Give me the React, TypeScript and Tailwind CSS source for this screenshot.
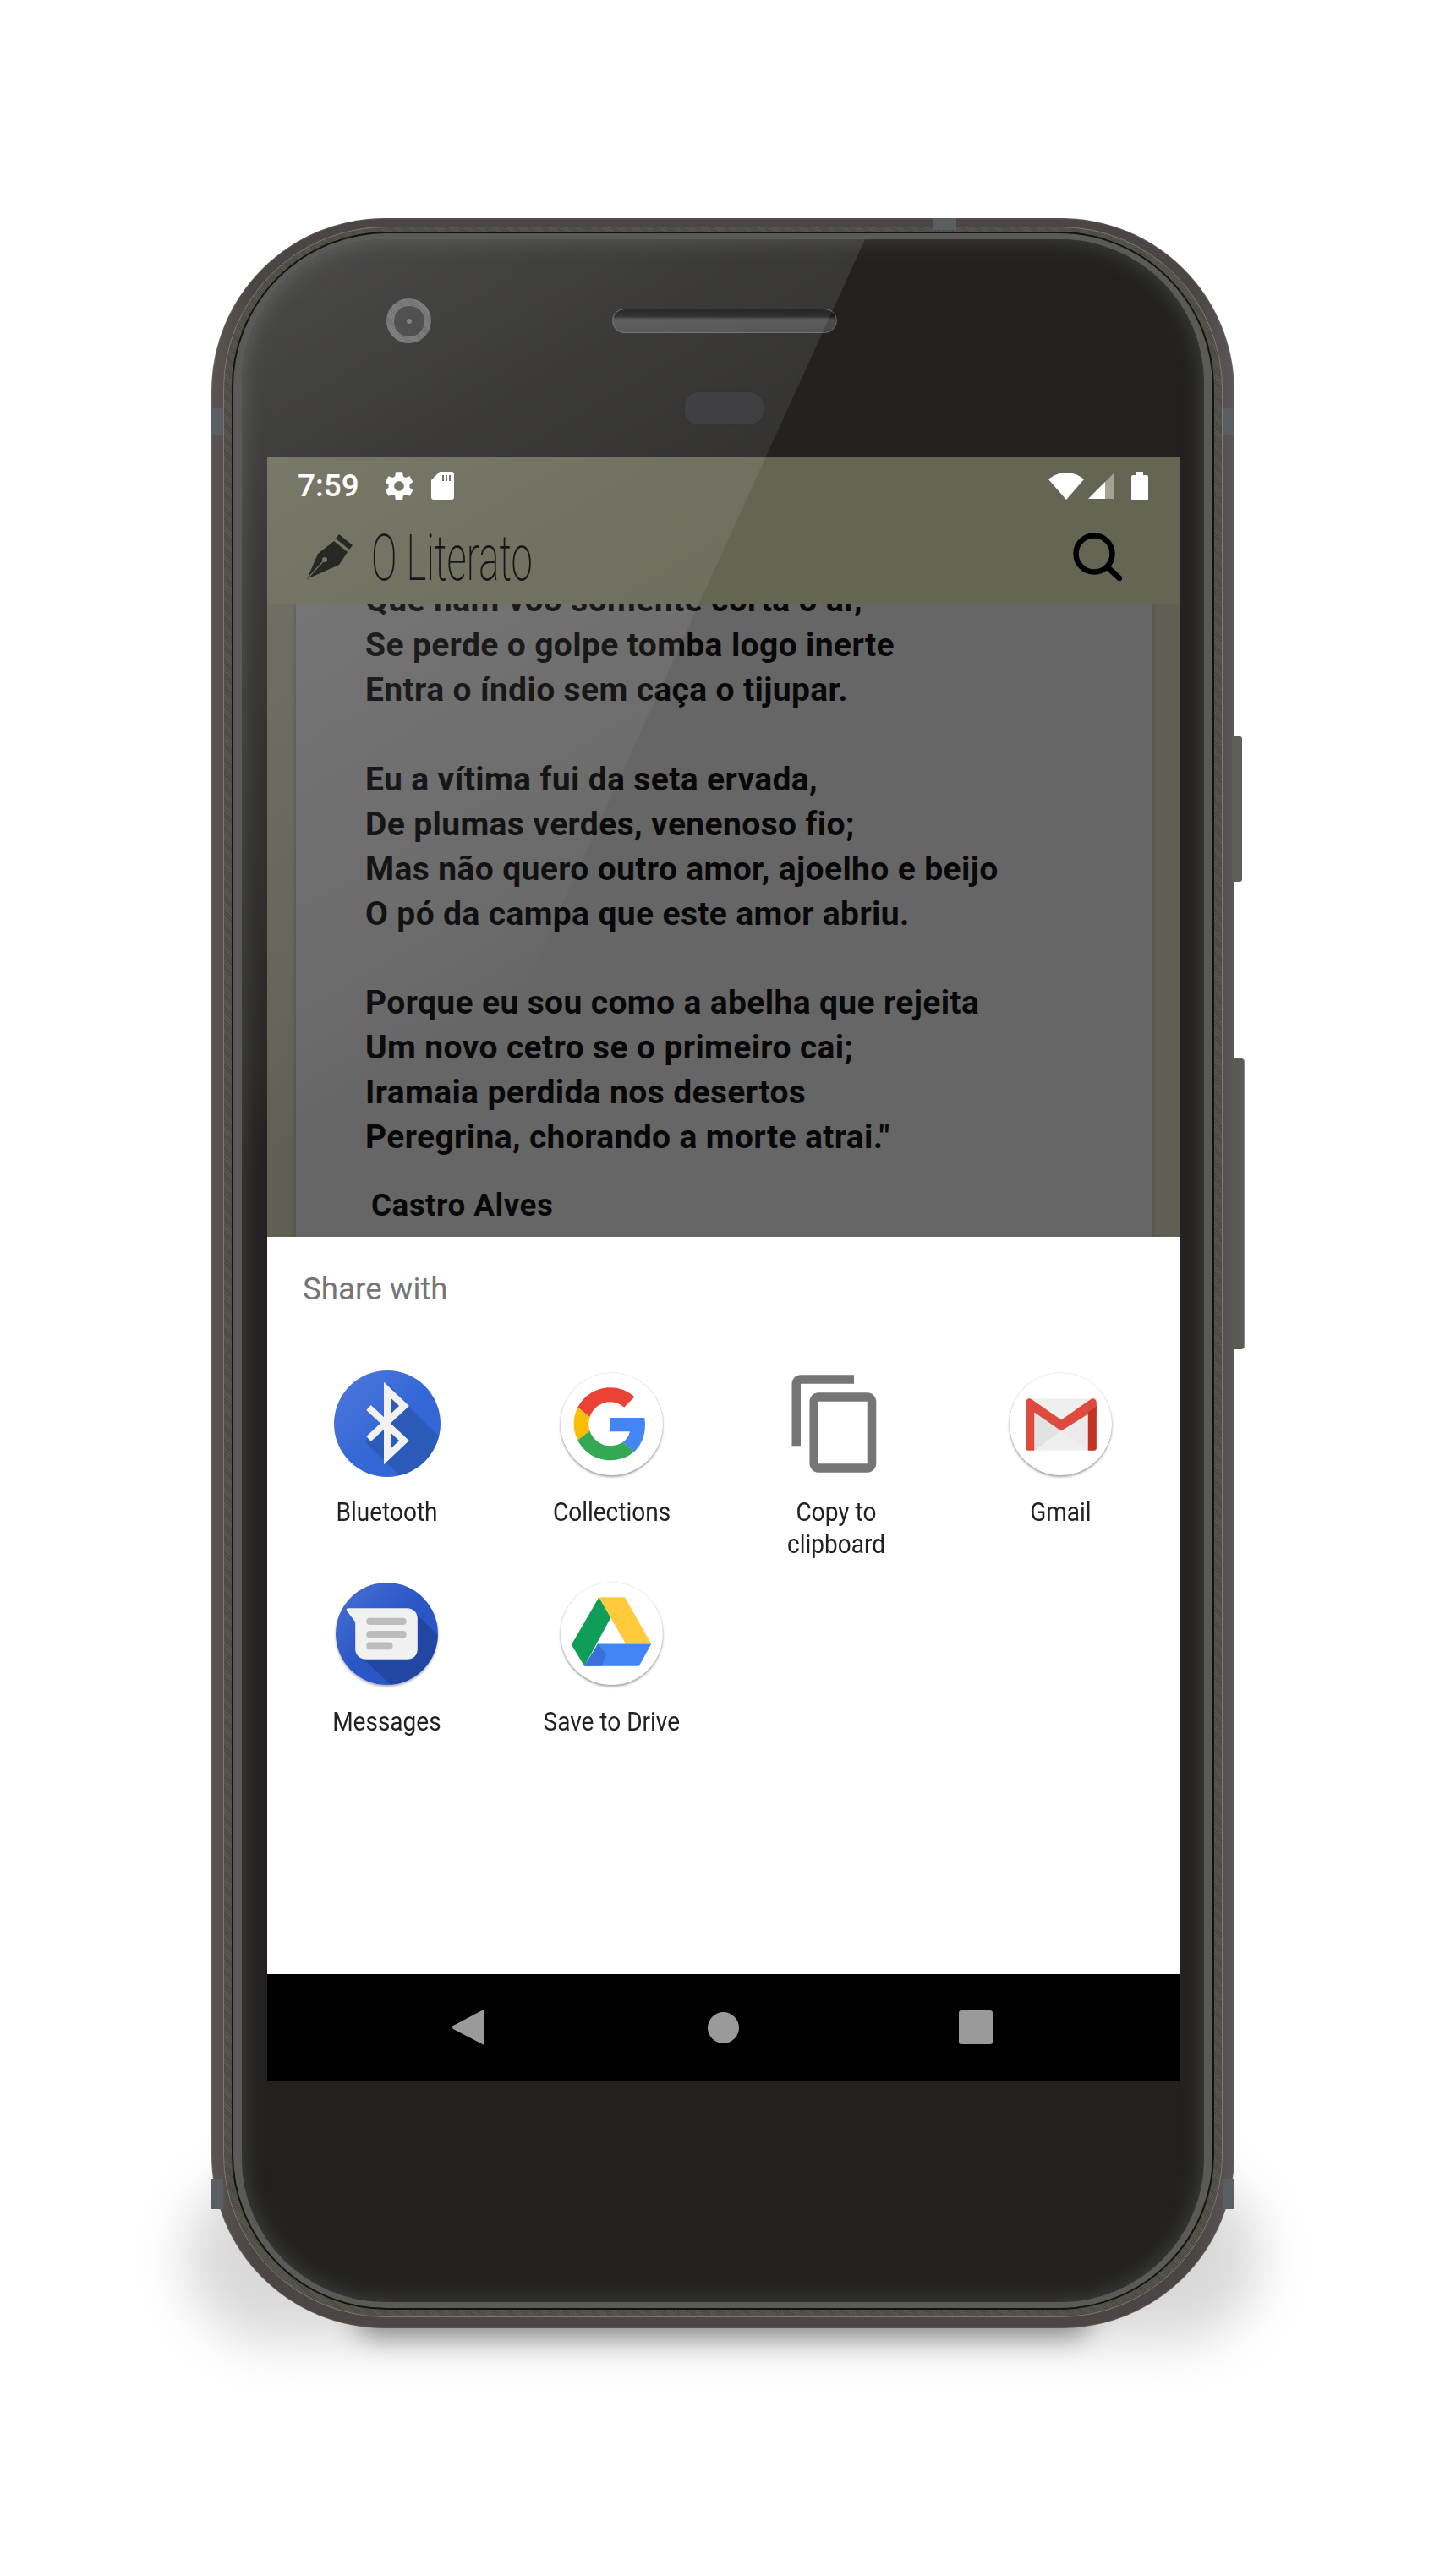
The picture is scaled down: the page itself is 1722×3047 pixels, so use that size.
import type { ReactNode } from "react";

const poem = [
  "Que nam voo somente corta o ar,",
  "Se perde o golpe tomba logo inerte",
  "Entra o índio sem caça o tijupar.",
  "",
  "Eu a vítima fui da seta ervada,",
  "De plumas verdes, venenoso fio;",
  "Mas não quero outro amor, ajoelho e beijo",
  "O pó da campa que este amor abriu.",
  "",
  "Porque eu sou como a abelha que rejeita",
  "Um novo cetro se o primeiro cai;",
  "Iramaia perdida nos desertos",
  'Peregrina, chorando a morte atrai."',
];

function WhiteCircle({ children }: { children: ReactNode }) {
  return (
    <div className="h-[121px] w-[121px] rounded-full bg-white shadow-[0_2px_3px_rgba(0,0,0,0.35),0_0_2px_rgba(0,0,0,0.15)]">
      <svg viewBox="0 0 120 120" className="h-full w-full">
        {children}
      </svg>
    </div>
  );
}

function BluetoothIcon() {
  return (
    <svg viewBox="0 0 126 126" className="h-[126px] w-[126px]">
      <defs>
        <clipPath id="bt-clip">
          <circle cx="63" cy="63" r="63" />
        </clipPath>
        <linearGradient id="bt-fill" x1="0" y1="0" x2="1" y2="1">
          <stop offset="0" stopColor="#4f78dc" />
          <stop offset="0.55" stopColor="#3367d6" />
        </linearGradient>
      </defs>
      <circle cx="63" cy="63" r="63" fill="url(#bt-fill)" />
      <polygon
        clipPath="url(#bt-clip)"
        points="66,18 88,42 130,84 130,130 84,130 36,84 60,60"
        fill="#1f3f7a"
        opacity="0.32"
      />
      <polyline
        points="41,44 83,83 63,102 63,23 83,42 41,81"
        fill="none"
        stroke="#f1f1f1"
        strokeWidth="8"
      />
    </svg>
  );
}

function CollectionsIcon() {
  return (
    <WhiteCircle>
      <g transform="translate(15.5 17) scale(1.78)">
        <path fill="#EA4335" d="M24 9.5c3.54 0 6.71 1.22 9.21 3.6l6.85-6.85C35.9 2.38 30.47 0 24 0 14.62 0 6.51 5.38 2.56 13.22l7.98 6.19C12.43 13.72 17.74 9.5 24 9.5z" />
        <path fill="#4285F4" d="M46.98 24.55c0-1.57-.15-3.09-.38-4.55H24v9.02h12.94c-.58 2.96-2.26 5.48-4.78 7.18l7.73 6c4.51-4.18 7.09-10.36 7.09-17.65z" />
        <path fill="#FBBC05" d="M10.53 28.59c-.5-1.45-.78-2.99-.78-4.59s.27-3.14.78-4.59l-7.98-6.19C.92 16.46 0 20.12 0 24c0 3.88.92 7.54 2.56 10.78l7.97-6.19z" />
        <path fill="#34A853" d="M24 48c6.48 0 11.93-2.13 15.89-5.81l-7.73-6c-2.15 1.45-4.92 2.3-8.16 2.3-6.26 0-11.57-4.22-13.47-9.91l-7.98 6.19C6.51 42.62 14.62 48 24 48z" />
      </g>
    </WhiteCircle>
  );
}

function CopyIcon() {
  return (
    <svg viewBox="0 0 24 24" className="h-[126px] w-[126px]" fill="#757575">
      <path d="M16 1H4c-1.1 0-2 .9-2 2v14h2V3h12V1zm3 4H8c-1.1 0-2 .9-2 2v14c0 1.1.9 2 2 2h11c1.1 0 2-.9 2-2V7c0-1.1-.9-2-2-2zm0 16H8V7h11v14z" />
    </svg>
  );
}

function GmailIcon() {
  return (
    <WhiteCircle>
      <rect x="19" y="30" width="83" height="61" rx="3" fill="#efefef" />
      <polygon points="29,44 60,68 29,91" fill="#e2e2e2" />
      <polygon points="92,44 60,68 92,91" fill="#ebebeb" />
      <polygon points="29,44 60,68 72,60 29,36" fill="#cfcfcf" opacity="0.7" />
      <path d="M19 91V35c0-3 2-5 4-5 1 0 2 .4 3 1l34.5 24L95 31c1-.6 2-1 3-1 2 0 4 2 4 5v7L60.5 68 29 46v45h-7c-2 0-3-1-3-3z" fill="#dd4b3e" />
      <path d="M92 91V46l10-7v49c0 2-1 3-3 3z" fill="#c23321" />
    </WhiteCircle>
  );
}

function MessagesIcon() {
  return (
    <div className="h-[121px] w-[121px] rounded-full shadow-[0_2px_3px_rgba(0,0,0,0.3)]">
      <svg viewBox="0 0 120 120" className="h-full w-full">
        <defs>
          <clipPath id="msg-clip">
            <circle cx="60" cy="60" r="60" />
          </clipPath>
          <linearGradient id="msg-fill" x1="0" y1="0" x2="1" y2="1">
            <stop offset="0" stopColor="#4a70d2" />
            <stop offset="0.5" stopColor="#2a56c6" />
          </linearGradient>
        </defs>
        <circle cx="60" cy="60" r="60" fill="url(#msg-fill)" />
        <polygon clipPath="url(#msg-clip)" points="92,34 130,72 130,130 75,130 28,85" fill="#15316f" opacity="0.42" />
        <path d="M15 30h69c7 0 12 5 12 12v36c0 7-5 12-12 12H36c-7 0-13-5-13-12V46L13 33c-1-2 0-3 2-3z" fill="#f1f1f1" />
        <rect x="36" y="41.5" width="47" height="8" rx="4" fill="#bdbdbd" />
        <rect x="36" y="56.5" width="47" height="8.5" rx="4" fill="#bdbdbd" />
        <rect x="36" y="70" width="31" height="8.5" rx="4" fill="#bdbdbd" />
      </svg>
    </div>
  );
}

function DriveIcon() {
  return (
    <WhiteCircle>
      <polygon points="45,17 12.7,73 28,98 59,41" fill="#0f9d58" />
      <polygon points="45,17 75.4,17 106.4,72 76.4,72" fill="#ffcb3d" />
      <polygon points="43.7,72 106.4,72 92,98 28,98" fill="#4285f4" />
      <polygon points="43.7,72 54,84 48,98 28,98" fill="#3a70d8" />
    </WhiteCircle>
  );
}

const shareTargets = [
  { label: "Bluetooth", icon: <BluetoothIcon /> },
  { label: "Collections", icon: <CollectionsIcon /> },
  { label: "Copy to clipboard", icon: <CopyIcon />, narrow: true },
  { label: "Gmail", icon: <GmailIcon /> },
  { label: "Messages", icon: <MessagesIcon /> },
  { label: "Save to Drive", icon: <DriveIcon /> },
];

function StatusBar() {
  return (
    <div className="flex h-[64px] items-center pt-[3px] pl-[36px] pr-[38px]">
      <span className="text-[37px] leading-none font-medium text-white">7:59</span>
      <svg viewBox="0 0 24 24" className="ml-[27px] h-[40px] w-[40px]" fill="#fff">
        <path d="M19.43 12.98c.04-.32.07-.64.07-.98s-.03-.66-.07-.98l2.11-1.65c.19-.15.24-.42.12-.64l-2-3.46c-.12-.22-.39-.3-.61-.22l-2.49 1c-.52-.4-1.08-.73-1.69-.98l-.38-2.65C14.46 2.18 14.25 2 14 2h-4c-.25 0-.46.18-.49.42l-.38 2.65c-.61.25-1.17.59-1.69.98l-2.49-1c-.23-.09-.49 0-.61.22l-2 3.46c-.13.22-.07.49.12.64l2.11 1.65c-.04.32-.07.65-.07.98s.03.66.07.98l-2.11 1.65c-.19.15-.24.42-.12.64l2 3.46c.12.22.39.3.61.22l2.49-1c.52.4 1.08.73 1.69.98l.38 2.65c.03.24.24.42.49.42h4c.25 0 .46-.18.49-.42l.38-2.65c.61-.25 1.17-.59 1.69-.98l2.49 1c.23.09.49 0 .61-.22l2-3.46c.12-.22.07-.49-.12-.64l-2.11-1.65zM12 15.5c-1.93 0-3.5-1.57-3.5-3.5s1.57-3.5 3.5-3.5 3.5 1.57 3.5 3.5-1.57 3.5-3.5 3.5z" />
      </svg>
      <svg viewBox="0 0 27 33" className="ml-[18px] h-[33px] w-[27px]">
        <path d="M10 0H24a3 3 0 0 1 3 3V30a3 3 0 0 1-3 3H3a3 3 0 0 1-3-3V10Z" fill="#fff" />
        <path d="M13 4h2v7h-2zM17 4h2v7h-2zM21 4h2v7h-2z" fill="#646452" />
      </svg>
      <svg viewBox="0 0 42 32" className="ml-auto h-[32px] w-[42px]">
        <path d="M21 32 0 8C6 3 13 0 21 0s15 3 21 8Z" fill="#fff" />
      </svg>
      <svg viewBox="0 0 31 31" className="ml-[5px] h-[31px] w-[31px]">
        <polygon points="20,11 31,0 31,31 20,31" fill="#a3a394" />
        <polygon points="0,31 20,11 20,31" fill="#fff" />
      </svg>
      <svg viewBox="0 0 20 34" className="ml-[20px] h-[34px] w-[20px]">
        <path d="M6 0h8v4h4a2 2 0 0 1 2 2v26a2 2 0 0 1-2 2H2a2 2 0 0 1-2-2V6a2 2 0 0 1 2-2h4Z" fill="#fff" />
      </svg>
    </div>
  );
}

function AppBar() {
  return (
    <div className="flex h-[110px] items-center pb-[3px] pl-[47px] pr-[69px]">
      <svg viewBox="0 0 56 55" className="h-[55px] w-[56px]">
        <path d="M38 1 54 14 50 19 34 6Z" fill="#0f0f0c" />
        <path d="M32 9 48 22 38 37 0 54 13 24Z" fill="#0f0f0c" />
        <path d="M1 53 20 32" stroke="#646452" strokeWidth="1.2" />
        <circle cx="21" cy="31" r="3" fill="#646452" />
      </svg>
      <span className="mt-[3px] ml-[20px] inline-block w-[187px] origin-left scale-x-[0.6] text-[76px] leading-none font-extralight whitespace-nowrap text-black">
        O Literato
      </span>
      <svg viewBox="0 0 58 57" className="ml-auto h-[57px] w-[58px]" fill="none" stroke="#000" strokeWidth="6.5" strokeLinecap="round">
        <circle cx="25" cy="25" r="21.5" />
        <path d="M41 41 55 54" />
      </svg>
    </div>
  );
}

function Reader() {
  return (
    <div className="h-[748px] overflow-hidden bg-[#5f5f54] px-[34px]">
      <div className="flow-root h-full bg-[#666666] pl-[82px] shadow-[0_0_6px_rgba(0,0,0,0.25)]">
        <div className="-mt-[31px] font-bold text-[#080808]">
          {poem.map((line, i) => (
            <div key={i} className="h-[52.95px] text-[39px] leading-[52.95px] tracking-[0.37px] whitespace-nowrap">
              {line}
            </div>
          ))}
          <div className="mt-[28px] ml-[7px] text-[36.75px] leading-[52.95px] tracking-[0.5px]">Castro Alves</div>
        </div>
      </div>
    </div>
  );
}

function ShareSheet() {
  return (
    <div className="h-[872px] bg-white">
      <div className="pt-[39px] pl-[42px] text-[36.75px] leading-[46px] text-[#757575]">Share with</div>
      <div className="mt-[73px] grid grid-cols-4 auto-rows-[248px] px-[9px]">
        {shareTargets.map((t) => (
          <div key={t.label} className="flex flex-col items-center">
            <div className="flex h-[126px] w-[126px] items-center justify-center">{t.icon}</div>
            <div
              className={`mt-[22px] scale-x-[0.875] text-center text-[32px] leading-[38px] text-[#212121] ${
                t.narrow ? "w-[180px]" : "whitespace-nowrap"
              }`}
            >
              {t.label}
            </div>
          </div>
        ))}
      </div>
    </div>
  );
}

function NavBar() {
  return (
    <div className="flex h-[126px] items-center bg-black pl-[219px]">
      <svg viewBox="0 0 38 42" className="h-[42px] w-[38px]" fill="#9a9a9a">
        <path d="M37 0c.6 0 1 .5 1 1v40c0 1-.8 1.300-1.500.6L1 23c-1.300-1-1.300-3 0-4L36 .4c.3-.2.600-.4 1-.4Z" />
      </svg>
      <div className="ml-[264px] h-[37px] w-[37px] rounded-full bg-[#9a9a9a]" />
      <div className="ml-[260px] h-[40px] w-[40px] rounded-[3px] bg-[#9a9a9a]" />
    </div>
  );
}

export default function App() {
  return (
    <div className="isolate h-[3047px] w-[1722px] overflow-hidden bg-white pt-[258px] pl-[250px] font-['Roboto',sans-serif]">
      <div className="relative h-[2496px] w-[1210px]">
        {/* shadow under the handset */}
        <div className="absolute -left-[30px] -right-[30px] -bottom-[16px] -z-10 h-[200px] rounded-[200px] bg-black/15 blur-[30px]" />
        <div className="absolute right-[170px] -bottom-[10px] left-[170px] -z-10 h-[50px] rounded-[25px] bg-black/40 blur-[16px]" />

        {/* side keys */}
        <div className="absolute -right-[9px] top-[613px] h-[172px] w-[12px] rounded-r-[3px] bg-[#5f5e5a]" />
        <div className="absolute -right-[12px] top-[994px] h-[344px] w-[15px] rounded-r-[4px] border-r border-[#8a8b8c] bg-[#5a5a54]" />

        <div className="h-full rounded-[205px] bg-[linear-gradient(90deg,#5a5553,#4b4643_4%,#4b4643_96%,#5c5658)] px-[14px] pt-[10px] pb-[13px] shadow-[inset_0_0_2px_rgba(255,255,255,0.3)]">
          <div className="h-full rounded-[192px] border border-[#7d7876] bg-[repeating-linear-gradient(45deg,#5a574f_0,#5a574f_1px,#4a4842_1px,#4a4842_2px)] px-[9px] pt-[5px] pb-[8px]">
            <div className="h-full rounded-[184px] border-2 border-[#141312] bg-[#5a5a56] px-[10px] pt-[7px] pb-[7px]">
              <div className="relative h-full overflow-hidden rounded-[170px] bg-[#232221] pl-[30px] pr-[28px] shadow-[inset_0_0_26px_#454542]">
                <div className="h-[258px]">
                  <div className="flex items-center pt-[70px] pl-[141px]">
                    <div className="flex h-[53px] w-[53px] items-center justify-center rounded-full bg-[repeating-linear-gradient(45deg,#6e6e6e_0,#6e6e6e_1px,#585858_1px,#585858_2px)]">
                      <div className="flex h-[36px] w-[36px] items-center justify-center rounded-full bg-[#333335]">
                        <div className="h-[6px] w-[6px] rounded-full bg-[#6a7358]" />
                      </div>
                    </div>
                    <div className="ml-[214px] h-[29px] w-[266px] rounded-full border border-[#6a6a6a] bg-[linear-gradient(180deg,#0f0f0f_0,#1a1a1a_30%,#4c4c4c_45%,#444_100%)]" />
                  </div>
                  <div className="mt-[57px] ml-[493px] h-[40px] w-[95px] rounded-[17px] border border-[#1f1f20] bg-[#2d2d30]" />
                </div>

                <div className="h-[1920px]">
                  <div className="bg-[#656553]">
                    <StatusBar />
                    <AppBar />
                  </div>
                  <Reader />
                  <ShareSheet />
                  <NavBar />
                </div>

                {/* glass reflection */}
                <div className="pointer-events-none absolute inset-0 bg-[linear-gradient(150deg,rgba(255,255,255,0.19)_0%,rgba(255,255,255,0.11)_12%,rgba(255,255,255,0.03)_32%,rgba(255,255,255,0)_36%)] [clip-path:polygon(0_0,737px_0,54px_1500px,0_1500px)]" />
              </div>
            </div>
          </div>
        </div>

        {/* antenna bands */}
        <div className="absolute top-[225px] left-0 h-[32px] w-[14px] bg-[#5a5f63]" />
        <div className="absolute top-[225px] right-0 h-[32px] w-[14px] bg-[#5a5f63]" />
        <div className="absolute top-[2320px] left-0 h-[35px] w-[14px] bg-[#5a5f63]" />
        <div className="absolute top-[2320px] right-0 h-[35px] w-[14px] bg-[#5a5f63]" />
        <div className="absolute top-0 left-[854px] h-[14px] w-[27px] bg-[#5a5f63]" />
      </div>
    </div>
  );
}
